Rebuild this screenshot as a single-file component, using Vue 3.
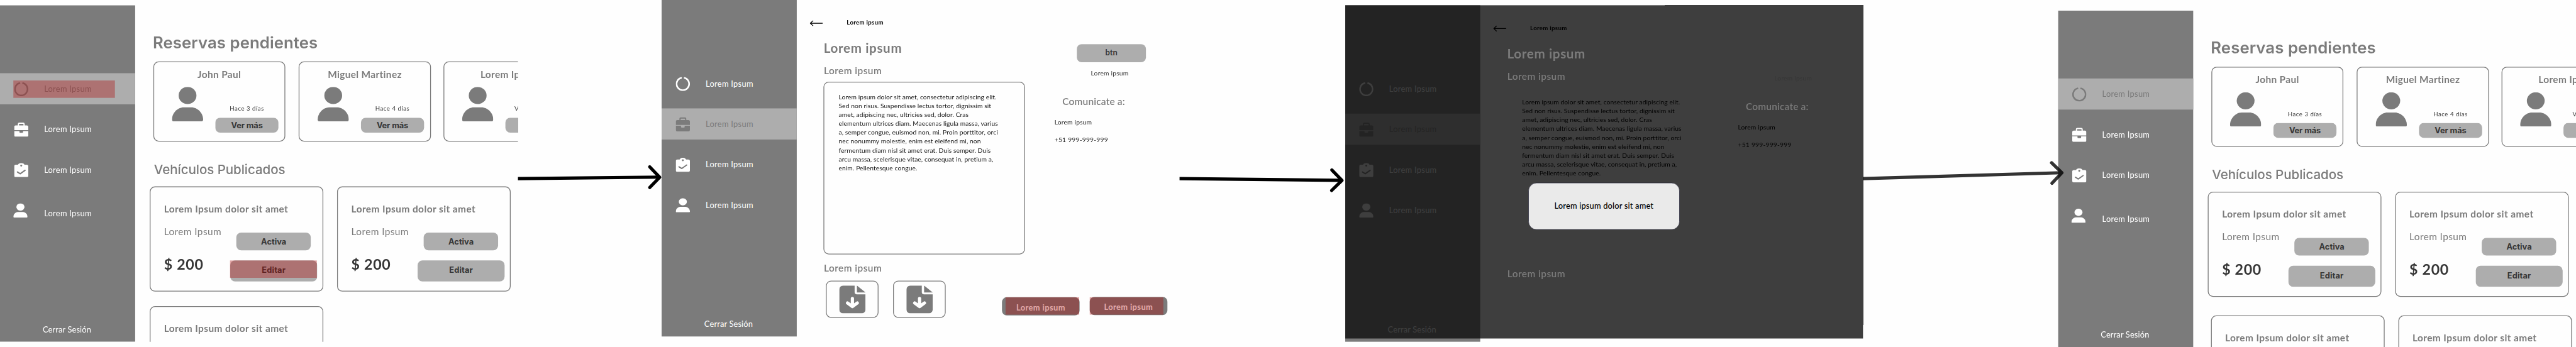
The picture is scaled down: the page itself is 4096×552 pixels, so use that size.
<script setup>
const nav = ['ring', 'briefcase', 'clipboard', 'person']
const people = [
  { name: 'John Paul', time: 'Hace 3 días' },
  { name: 'Miguel Martinez', time: 'Hace 4 días' },
  { name: 'Lorem Ipsum', time: 'V', cut: true }
]
const paragraph = [
  'Lorem ipsum dolor sit amet, consectetur adipiscing elit.',
  'Sed non risus. Suspendisse lectus tortor, dignissim sit',
  'amet, adipiscing nec, ultricies sed, dolor. Cras',
  'elementum ultrices diam. Maecenas ligula massa, varius',
  'a, semper congue, euismod non, mi. Proin porttitor, orci',
  'nec nonummy molestie, enim est eleifend mi, non',
  'fermentum diam nisl sit amet erat. Duis semper. Duis',
  'arcu massa, scelerisque vitae, consequat in, pretium a,',
  'enim. Pellentesque congue.'
]
const screens = [
  { kind: 'list', active: 0, cls: 's1', marked: true, rows: [2, 1] },
  { kind: 'detail', active: 1, cls: 's2', marked: true },
  { kind: 'detail', active: 1, cls: 's3', modal: true },
  { kind: 'list', active: 0, cls: 's4', rows: [2, 2] }
]
</script>

<template>
  <div class="viewport">
    <div class="board">
      <section v-for="s in screens" :key="s.cls" class="screen" :class="[s.cls, s.kind, { dimmed: s.modal }]">
        <aside class="sidebar">
          <nav>
            <div v-for="(icon, i) in nav" :key="icon" class="row" :class="[icon, { active: i === s.active }]">
              <svg class="icon" viewBox="0 0 35 35">
                <path v-if="icon === 'ring'" d="M13.1 2.6A15.5 15.5 0 1 0 21.9 2.6" fill="none" stroke="currentColor" stroke-width="4" stroke-linecap="round" />
                <g v-else-if="icon === 'briefcase'" fill="currentColor">
                  <path fill-rule="evenodd" d="M9 7V4a4 4 0 0 1 4-4h9a4 4 0 0 1 4 4v3h5a4 4 0 0 1 4 4v7.8H0V11a4 4 0 0 1 4-4zM12 7h11V4.300a1 1 0 0 0-1-1h-9a1 1 0 0 0-1 1z" />
                  <path d="M0 21h13v2.500a2 2 0 0 0 2 2h5a2 2 0 0 0 2-2V21h13v10a4 4 0 0 1-4 4H4a4 4 0 0 1-4-4z" />
                </g>
                <g v-else-if="icon === 'clipboard'">
                  <path fill="currentColor" fill-rule="evenodd" d="M4 4.300h5.500C11 1.500 13.800 0 17.500 0S24 1.500 25.500 4.300H31a4 4 0 0 1 4 4V31a4 4 0 0 1-4 4H4a4 4 0 0 1-4-4V8.300a4 4 0 0 1 4-4zM17.500 4.200a2.500 2.300 0 1 0 0 4.600 2.500 2.300 0 1 0 0-4.600z" />
                  <path class="tick" d="M8 22.300l7 4.300L27 18" />
                </g>
                <g v-else fill="currentColor">
                  <ellipse cx="17.500" cy="8.900" rx="10" ry="8.900" />
                  <path d="M11 21.300h13c6 0 11 6 11 11.700 0 1.200-.8 2-2 2H2c-1.200 0-2-.8-2-2 0-5.700 5-11.700 11-11.700z" />
                </g>
              </svg>
              <span class="row-label">Lorem Ipsum</span>
              <i v-if="s.kind === 'list' && s.marked && i === 0" class="mark mark-row"></i>
            </div>
          </nav>
          <span class="logout">Cerrar Sesión</span>
        </aside>

        <main v-if="s.kind === 'list'" class="main">
          <h1>Reservas pendientes</h1>
          <div class="people">
            <article v-for="p in people" :key="p.name" class="person-card">
              <h3>{{ p.name }}</h3>
              <div class="person-body">
                <svg class="avatar" viewBox="0 0 77 85">
                  <ellipse cx="38.500" cy="21.200" rx="22" ry="21.200" />
                  <path d="M29 50.300h19c15 0 29 14 29 30.500 0 2.600-1.400 4.200-4 4.200H4c-2.600 0-4-1.600-4-4.200C0 64.300 14 50.300 29 50.300z" />
                </svg>
                <div class="person-side">
                  <time :class="{ cut: p.cut }">{{ p.time }}</time>
                  <button class="pill more">Ver más</button>
                </div>
              </div>
            </article>
          </div>
          <h2>Vehículos Publicados</h2>
          <div v-for="(n, r) in s.rows" :key="r" class="cars">
            <article v-for="k in n" :key="k" class="car">
              <h3>Lorem Ipsum dolor sit amet</h3>
              <div class="car-body">
                <div class="car-info">
                  <p>Lorem Ipsum</p>
                  <strong>$ 200</strong>
                </div>
                <div class="car-actions">
                  <button class="pill state">Activa</button>
                  <button class="pill edit">
                    Editar
                    <i v-if="s.marked && r === 0 && k === 1" class="mark mark-edit"></i>
                  </button>
                </div>
              </div>
            </article>
          </div>
        </main>

        <main v-else class="main">
          <header class="crumb">
            <svg class="back" viewBox="0 0 32 15"><path d="M8 1.500L1.500 7.500L8 13.500M1.500 7.500H32" fill="none" stroke="#000" stroke-width="2" stroke-linecap="round" stroke-linejoin="round" /></svg>
            <span>Lorem ipsum</span>
          </header>
          <div class="detail-top">
            <div class="detail-left">
              <h1>Lorem ipsum</h1>
              <h2>Lorem ipsum</h2>
              <div class="text-box">
                <div v-for="l in paragraph" :key="l">{{ l }}</div>
              </div>
            </div>
            <div class="detail-right">
              <button class="pill btn shade">btn</button>
              <p class="caption">Lorem ipsum</p>
              <h2>Comunicate a:</h2>
              <p class="contact">Lorem ipsum</p>
              <p class="contact">+51 999-999-999</p>
            </div>
          </div>
          <h2 class="files-title">Lorem ipsum</h2>
          <div class="detail-bottom shade">
            <div v-for="f in 2" :key="f" class="file">
              <svg viewBox="0 0 65 69">
                <path fill="#7b7b7b" d="M10 0H38V16.500Q38 21.700 43.500 21.700H65V59a10 10 0 0 1-10 10H10A10 10 0 0 1 0 59V10A10 10 0 0 1 10 0zM43.700 0L65 17H43.700z" />
                <path fill="none" stroke="#fff" stroke-width="8" stroke-linecap="round" stroke-linejoin="round" d="M32.500 32V50M20.500 43.200L32.500 52L44.500 43.200" />
              </svg>
            </div>
            <button class="action first">Lorem ipsum<i class="mark"></i></button>
            <button class="action second">Lorem ipsum<i class="mark"></i></button>
          </div>
        </main>

        <template v-if="s.modal">
          <div class="backdrop"></div>
          <div class="modal">Lorem ipsum dolor sit amet</div>
        </template>
      </section>

      <svg class="flow" viewBox="0 0 6366 858" fill="none" stroke="#000" stroke-width="8" stroke-linejoin="round">
        <path d="M1280 441.600L1630 438" />
        <path d="M1605.700 412.600L1630.300 438.200L1605.700 463.500" stroke-linecap="round" />
        <path d="M2915 441.600L3316 446" />
        <path d="M3291.300 420.300L3316.500 446L3290.800 471" stroke-linecap="round" />
        <g opacity=".8">
          <path d="M4604 441.600L5095 427" />
          <path d="M5070 402.500L5095.500 427.200L5071 453" stroke-linecap="round" />
        </g>
      </svg>
    </div>
  </div>
</template>

<style>
html, body { margin: 0; background: #fff; overflow: hidden; }
</style>

<style scoped>
* { box-sizing: border-box; }
h1, h2, h3, p { margin: 0; }
.viewport { width: 4096px; height: 552px; overflow: hidden; background: #fefefe; }
.board {
  position: relative;
  display: flex;
  align-items: flex-start;
  width: 6366px;
  height: 858px;
  transform: scale(.64342, .64336);
  transform-origin: 0 0;
  font-family: Lato, "Liberation Sans", sans-serif;
  line-height: 1.2;
  white-space: nowrap;
}
.flow { position: absolute; left: 0; top: 0; width: 6366px; height: 858px; z-index: 5; }
.screen { position: relative; display: flex; flex: none; width: 1280px; height: 832px; overflow: hidden; }
.s1 { margin-top: 13px; }
.s2 { margin-left: 355px; }
.s3 { margin: 13px 0 0 409px; }
.s4 { margin: 26px 0 0 482px; }

/* sidebar */
.sidebar { --bg: #7b7b7b; flex: none; display: flex; flex-direction: column; width: 334px; background: #7b7b7b; color: #fff; font-size: 20px; }
nav { margin-top: 168px; display: flex; flex-direction: column; gap: 23.3px; }
.row { position: relative; display: flex; align-items: center; height: 76.700px; padding-left: 35px; }
.row.active { --bg: #adadad; background: #adadad; color: #7b7b7b; }
.icon { width: 35px; height: 35px; margin-top: 2px; }
.tick { fill: none; stroke: var(--bg); stroke-width: 3.2px; stroke-linecap: round; stroke-linejoin: round; }
.row-label { margin-left: 39px; letter-spacing: .43px; }
.list .person .icon { margin-left: -2px; }
.list .person .row-label { margin-left: 41px; padding-top: 16px; }
.logout { margin: 244px 0 0 105.500px; letter-spacing: .2px; }
.mark { position: absolute; background: rgba(173, 0, 0, .34); }
.mark-row { left: 33px; top: 18px; width: 251px; height: 42.500px; }

/* shared controls */
button { position: relative; display: flex; align-items: center; justify-content: center; border: 0; padding: 0; margin: 0; line-height: 1.2; white-space: nowrap; }
.pill { background: #adadad; color: #363636; border-radius: 12px; font: 700 20px/1.2 Inter, sans-serif; }

/* list screen */
.list .main { flex: 1; min-width: 0; }
.list h1 { margin: 68.200px 0 0 43.500px; font: 600 40px/48px Inter, sans-serif; letter-spacing: .12px; color: #7b7b7b; }
.list h2 { margin: 49.700px 0 0 46.500px; font: 500 32px/38.400px Inter, sans-serif; letter-spacing: -.12px; color: #7b7b7b; }
.people { display: flex; gap: 33px; margin: 22.800px 0 0 44.500px; }
.person-card { flex: none; width: 326.700px; height: 198px; border: 2px solid #7b7b7b; border-radius: 13px; }
.person-card + .person-card + .person-card { margin-left: -2.300px; }
h3 { font-size: 24px; font-weight: 700; color: #7b7b7b; letter-spacing: .5px; }
.person-card h3 { margin-top: 14.900px; text-align: center; }
.person-body { display: flex; align-items: flex-start; margin: 17.300px 0 0 44.700px; }
.avatar { width: 77px; height: 85px; fill: #7b7b7b; }
.person-side { display: flex; flex-direction: column; align-items: center; width: 156px; margin: 44.200px 0 0 30px; }
.person-side time { font-size: 15px; line-height: 18px; letter-spacing: .8px; color: #363636; }
.person-side time.cut { align-self: flex-start; margin-left: 22px; }
.more { width: 156px; height: 37.500px; margin-top: 13.800px; letter-spacing: -.2px; }
.cars { display: flex; gap: 34.500px; margin: 23.200px 0 0 36.400px; }
.cars + .cars { margin-top: 36.600px; }
.s4 .cars + .cars { margin: 46.500px 0 0 44px; }
.car { flex: none; width: 428.500px; height: 259.400px; border: 2px solid #7b7b7b; border-radius: 13px; }
.car h3 { margin: 38.900px 0 0 32.800px; letter-spacing: .64px; }
.car-body { display: flex; }
.car-info { width: 196.700px; padding: 27.500px 0 0 32.800px; color: #7b7b7b; font-size: 24px; letter-spacing: .6px; }
.car-info strong { display: block; margin-top: 44.800px; font-size: 36px; letter-spacing: 1.08px; color: #363636; }
.car-actions { display: flex; flex-direction: column; align-items: center; width: 214.600px; margin-top: 44.100px; }
.state { width: 184px; height: 44.300px; }
.edit { width: 214.600px; height: 52px; margin-top: 24.600px; padding-bottom: 3px; letter-spacing: .2px; }
.mark-edit { left: -1.300px; top: 0; width: 215px; height: 42.700px; }

/* detail screen */
.detail .main { flex: none; width: 946px; color: #000; }
.crumb { display: flex; align-items: flex-start; height: 18px; margin: 45.900px 0 0 31.500px; font-size: 15px; font-weight: 700; letter-spacing: .48px; }
.back { width: 32px; height: 15px; margin-top: 4.200px; }
.crumb span { margin-left: 60px; }
.detail-top { display: flex; height: 529px; margin-top: 36.400px; }
.detail-left { flex: none; width: 498px; margin-left: 66px; }
.detail h1 { margin-left: .5px; font-size: 32px; font-weight: 700; letter-spacing: 1.01px; color: #7b7b7b; }
.detail h2 { font-size: 24px; font-weight: 600; letter-spacing: .68px; color: #7b7b7b; }
.detail-left h2 { margin: 22.600px 0 0 1px; }
.text-box { height: 427.400px; margin-top: 11.900px; padding: 23.900px 0 0 35.500px; border: 2px solid #7b7b7b; border-radius: 13px; font-size: 16px; line-height: 22px; letter-spacing: .12px; color: #161616; }
.detail-right { width: 382px; padding-top: 8.600px; }
.btn { width: 171px; height: 45px; margin-left: 128px; padding-bottom: 4px; font: 700 20px/1.2 Lato, sans-serif; }
.detail-right .caption { margin: 15.800px 0 0 128px; width: 162.600px; text-align: center; font-size: 16px; letter-spacing: .3px; color: #363636; }
.detail-right h2 { margin: 46.800px 0 0 92.500px; letter-spacing: .27px; }
.contact { margin: 26.100px 0 0 73px; font-size: 16px; letter-spacing: .25px; color: #161616; }
.contact + .contact { margin-top: 25.100px; letter-spacing: .33px; }
.dimmed .text-box, .dimmed .contact { color: #000; }
.detail .files-title { margin: 20px 0 0 67px; }
.detail-bottom { display: flex; align-items: flex-start; margin: 15.800px 0 0 72px; }
.file { display: flex; justify-content: center; width: 130px; height: 92px; margin-right: 36px; padding-top: 10px; border: 2px solid #7b7b7b; border-radius: 13px; }
.file svg { width: 65px; height: 69px; }
.action { width: 191.700px; height: 45px; border-radius: 12px; background: #7b7b7b; color: #fff; font: 700 20px/1.2 Lato, sans-serif; letter-spacing: .63px; }
.first { margin: 41px 0 0 103.200px; padding-top: 5px; }
.second { margin: 39.900px 0 0 25px; padding-top: 5px; }
.first .mark { left: 9px; top: 0; width: 182.300px; height: 43px; }
.second .mark { left: 0; top: 1px; width: 182px; height: 43px; }

/* modal state */
.backdrop { position: absolute; left: 0; top: 0; width: 1280px; height: 824px; background: rgba(14, 14, 14, .8); z-index: 1; }
.dimmed .main { position: relative; z-index: 2; }
.dimmed .text-box { border-color: transparent; }
.dimmed .shade { visibility: hidden; }
.modal { position: absolute; left: 453px; top: 439px; width: 373.500px; height: 115.500px; z-index: 3; display: flex; align-items: center; justify-content: center; padding-bottom: 3px; border: 1px solid #1b1a30; border-radius: 20px; background: #eaeaea; color: #000; font-size: 20px; font-weight: 500; letter-spacing: .25px; }
</style>
